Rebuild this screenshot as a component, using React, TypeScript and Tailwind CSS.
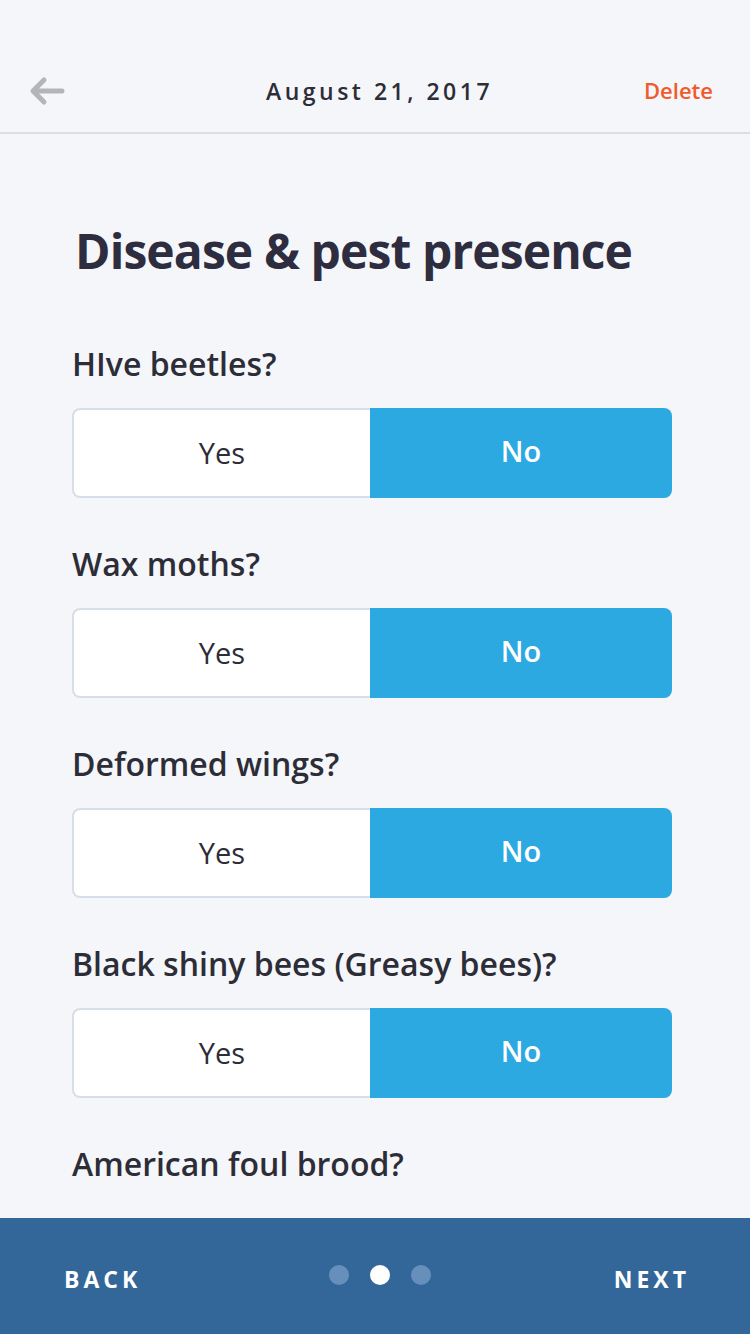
import { useState } from "react";

const questions = [
  "HIve beetles?",
  "Wax moths?",
  "Deformed wings?",
  "Black shiny bees (Greasy bees)?",
  "American foul brood?",
];

function YesNo({ value, onChange }: { value: boolean; onChange: (v: boolean) => void }) {
  return (
    <div className="flex h-[90px] w-[600px]">
      <button
        onClick={() => onChange(true)}
        className={
          value
            ? "w-[298px] rounded-l-[8px] bg-[#2ca9e1] text-white text-[29px] font-semibold"
            : "w-[298px] rounded-l-[8px] border-2 border-r-0 border-[#d8dee7] bg-white text-[#2d2d38] text-[29px]"
        }
      >
        Yes
      </button>
      <button
        onClick={() => onChange(false)}
        className={
          !value
            ? "flex-1 rounded-r-[8px] bg-[#2ca9e1] text-white text-[29px] font-semibold pb-[4px]"
            : "flex-1 rounded-r-[8px] border-2 border-l-0 border-[#d8dee7] bg-white text-[#2d2d38] text-[29px]"
        }
      >
        No
      </button>
    </div>
  );
}

export default function App() {
  const [answers, setAnswers] = useState<boolean[]>(questions.map(() => false));

  return (
    <div
      className="relative w-[750px] h-[1334px] bg-[#f5f6fa] overflow-hidden flex flex-col"
      style={{ fontFamily: '"Open Sans", "Noto Sans", sans-serif' }}
    >
      <header className="h-[134px] shrink-0 border-b-2 border-[#dcdee3] flex items-end pb-[24px] px-[28px]">
        <div className="w-full flex items-center justify-between">
          <svg width="36" height="30" viewBox="0 0 36 30" className="ml-[1px]">
            <path
              d="M33 15H5M15 4L4 15l11 11"
              fill="none"
              stroke="#b3b5b9"
              strokeWidth="5"
              strokeLinecap="round"
              strokeLinejoin="round"
            />
          </svg>
          <div className="text-[23px] font-semibold tracking-[3.5px] text-[#2d2d38] ml-[50px]">
            August 21, 2017
          </div>
          <div className="text-[22px] font-semibold text-[#f15a2b] mr-[9px]">Delete</div>
        </div>
      </header>

      {/* scroll area, cut off just above the footer */}
      <main className="h-[1066px] shrink-0 overflow-hidden px-[72px] pt-[93px]">
        <h1 className="text-[48px] font-bold text-[#2d2d3f] leading-none ml-[3px] tracking-[-0.9px]">
          Disease &amp; pest presence
        </h1>
        <div className="mt-[70px] flex flex-col gap-[47px]">
          {questions.map((q, i) => (
            <div key={q}>
              <div className="text-[32px] font-semibold text-[#2d2d38] leading-[40px] -mt-[1px]">{q}</div>
              <div className="mt-[24px]">
                <YesNo
                  value={answers[i]}
                  onChange={(v) => setAnswers((a) => a.map((x, j) => (j === i ? v : x)))}
                />
              </div>
            </div>
          ))}
        </div>
      </main>

      <footer className="absolute bottom-0 left-0 w-full h-[116px] bg-[#336699] grid grid-cols-3 items-center px-[60px] text-white">
        <span className="text-[23px] font-bold tracking-[4px] mt-[6px] ml-[4px]">BACK</span>
        <div className="flex items-center justify-center gap-[21px] ml-[10px] mb-[2px]">
          <span className="w-[20px] h-[20px] rounded-full bg-[#6690bb]" />
          <span className="w-[20px] h-[20px] rounded-full bg-white" />
          <span className="w-[20px] h-[20px] rounded-full bg-[#6690bb]" />
        </div>
        <span className="text-[23px] font-bold tracking-[4px] mt-[6px] text-right">NEXT</span>
      </footer>
    </div>
  );
}
